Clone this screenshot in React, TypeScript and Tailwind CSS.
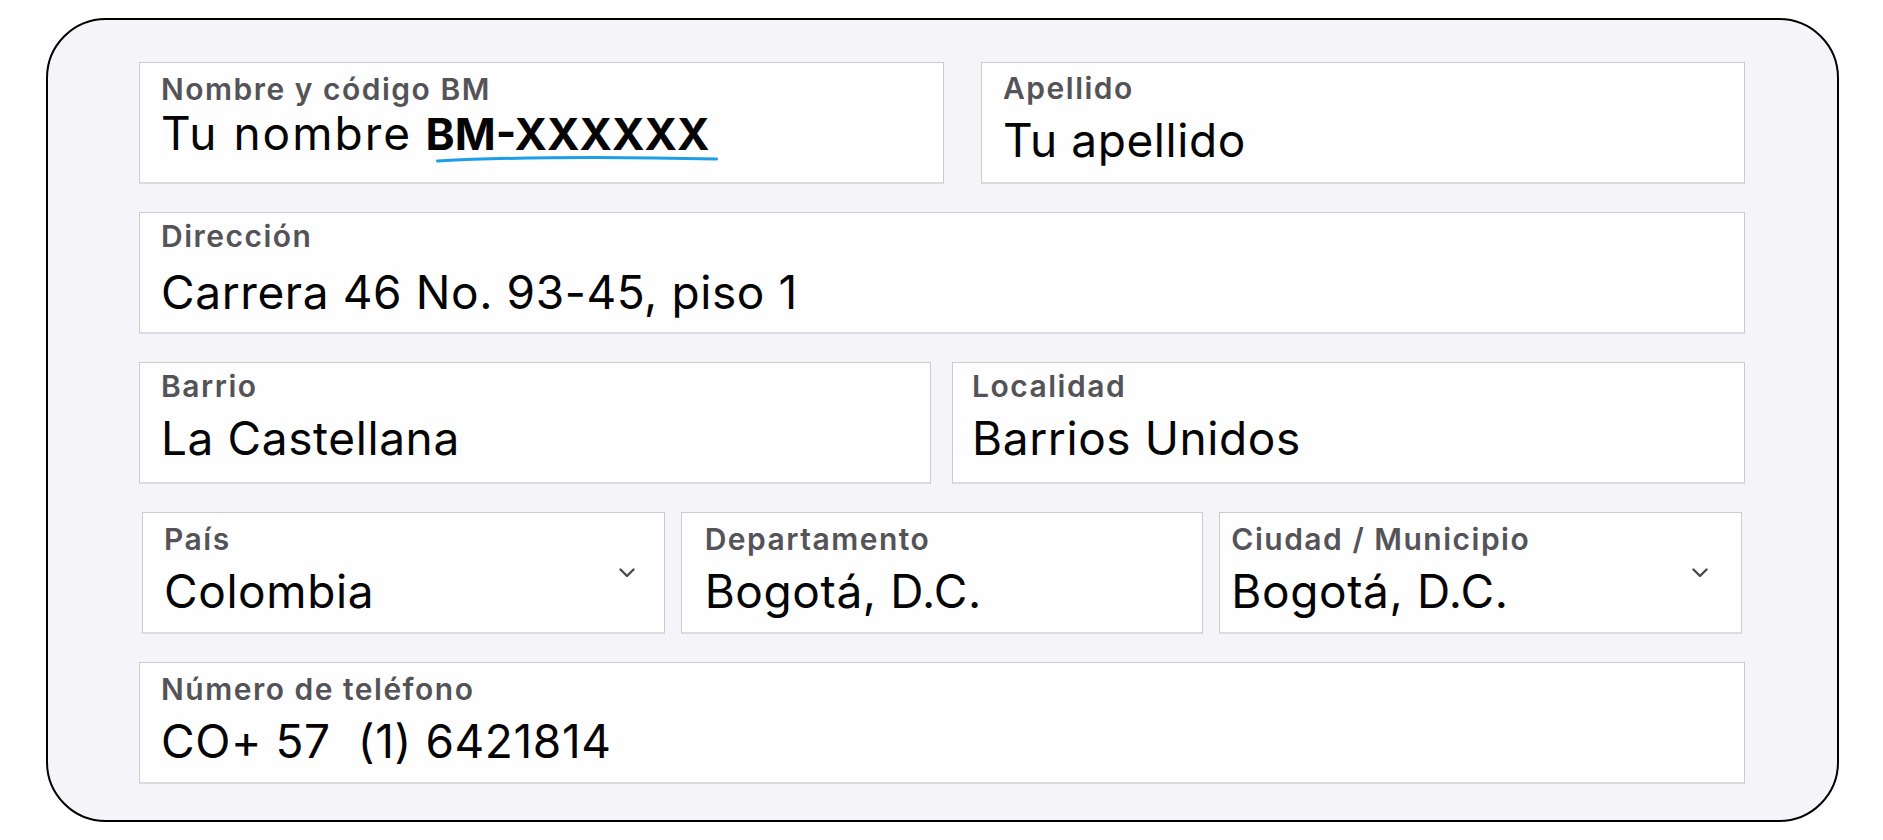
import React from 'react';

type FieldProps = {
  label: string;
  value: React.ReactNode;
  pad?: string;
  labelTop?: string;
  valueGap?: string;
  chevron?: string;
};

const Chevron: React.FC = () => (
  <svg width="16" height="10" viewBox="0 0 16 10" className="shrink-0">
    <polyline points="1.5,1.5 8,8 14.5,1.5" fill="none" stroke="#4b4b4f" strokeWidth="2.4" strokeLinecap="round" strokeLinejoin="round" />
  </svg>
);

const Field: React.FC<FieldProps> = ({ label, value, pad = 'pl-[21px]', labelTop = 'pt-[8px]', valueGap = 'mt-[18px]', chevron }) => (
  <div className={`flex h-[122px] items-center border border-b-2 border-[#cbcacf] border-b-[#dcdbe0] bg-[#fefefe] ${pad} ${chevron ?? 'pr-6'}`}>
    <div className={`flex h-full min-w-0 flex-1 flex-col ${labelTop}`}>
      <span className="block text-[30px] font-semibold leading-[30px] tracking-[1.5px] text-[#545358]">{label}</span>
      <span className={`block whitespace-nowrap text-[46px] leading-[46px] tracking-[0.6px] text-[#050505] ${valueGap}`}>{value}</span>
    </div>
    {chevron && <Chevron />}
  </div>
);

const App: React.FC = () => {
  return (
    <div className="min-h-[840px] w-[1883px] bg-white pt-[18px] pl-[46px] font-['Inter','Noto_Sans',sans-serif]">
      <div className="h-[804px] w-[1793px] rounded-[60px] border-2 border-black bg-[#f5f4f9] pt-[42px] pl-[91px] pr-[92px]">
        <div className="flex flex-col gap-[28px]">
          <div className="grid grid-cols-[805px_764px] gap-x-[37px]">
            <Field
              label="Nombre y código BM"
              labelTop="pt-[11px]"
              valueGap="mt-[6px]"
              value={
                <>
                  <span className="tracking-[2px]">Tu nombre</span>{' '}
                  <span className="relative inline-block text-[44px] font-bold tracking-[0px]">
                    BM-XXXXXX
                    <svg
                      className="absolute left-[10px] top-[calc(100%-3px)] h-[10px] w-[282px]"
                      viewBox="0 0 282 10"
                      preserveAspectRatio="none"
                    >
                      <path d="M1.5 7 Q 120 1 280.5 5" fill="none" stroke="#1c9ee8" strokeWidth="3" strokeLinecap="round" />
                    </svg>
                  </span>
                </>
              }
            />
            <Field label="Apellido" value="Tu apellido" labelTop="pt-[10px]" valueGap="mt-[14px]" />
          </div>

          <Field label="Dirección" value="Carrera 46 No. 93-45, piso 1" />

          <div className="grid grid-cols-[792px_793px] gap-x-[21px]">
            <Field label="Barrio" value="La Castellana" valueGap="mt-[14px]" />
            <Field label="Localidad" value="Barrios Unidos" pad="pl-[19px]" valueGap="mt-[14px]" />
          </div>

          <div className="grid grid-cols-3 gap-x-4 px-[3px]">
            <Field label="País" value="Colombia" labelTop="pt-[11px]" valueGap="mt-[14px]" chevron="pr-[29px]" />
            <Field label="Departamento" value="Bogotá, D.C." pad="pl-[23px]" labelTop="pt-[11px]" valueGap="mt-[14px]" />
            <Field label="Ciudad / Municipio" value="Bogotá, D.C." pad="pl-[11px]" labelTop="pt-[11px]" valueGap="mt-[14px]" chevron="pr-[33px]" />
          </div>

          <Field label="Número de teléfono" value={<>CO+ 57&nbsp;&nbsp;(1) 6421814</>} labelTop="pt-[11px]" valueGap="mt-[14px]" />
        </div>
      </div>
    </div>
  );
};

export default App;
